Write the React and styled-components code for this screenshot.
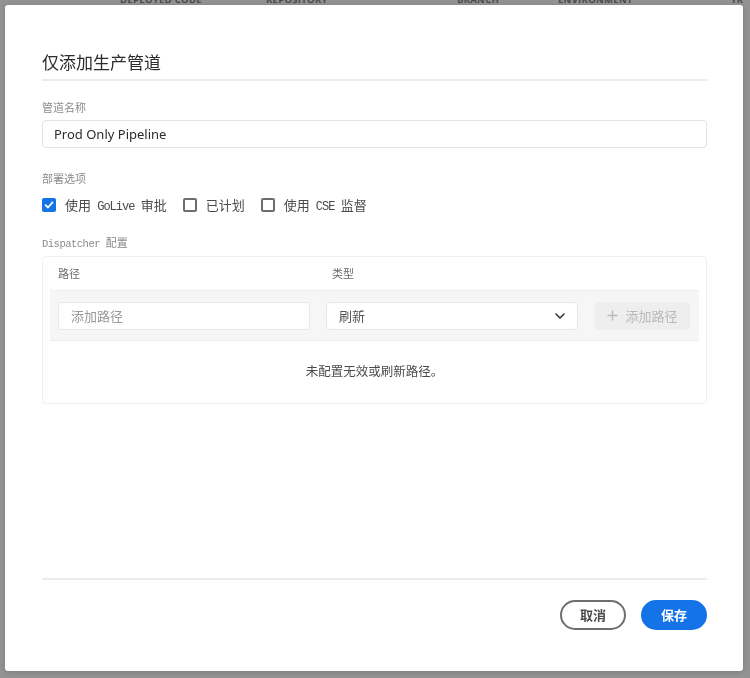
import styled, { createGlobalStyle } from "styled-components";

const GlobalStyle = createGlobalStyle`
  html, body {
    margin: 0;
    padding: 0;
    background: #929292;
    font-family: "Noto Sans", "Noto Sans CJK SC", sans-serif;
  }
`;

const Page = styled.div`
  width: 750px;
  height: 678px;
  overflow: hidden;
  background: #929292;
`;

const TableHead = styled.div`
  display: flex;
  margin-top: -7px;
  height: 14px;
  font-family: "Open Sans", sans-serif;
  font-size: 9.5px;
  font-weight: 700;
  letter-spacing: 0.3px;
  color: #4a4a4a;
  white-space: nowrap;
`;

const HeadCell = styled.div`
  width: ${(p) => p.w}px;
  flex-shrink: 0;
`;

const Overlay = styled.div`
  position: fixed;
  top: 5px;
  left: 5px;
  width: 738px;
  height: 666px;
  box-sizing: border-box;
  background: #fff;
  border-radius: 3px;
  box-shadow: 0 1px 4px rgba(0, 0, 0, 0.15);
  padding: 0 36px 41px 37px;
  display: flex;
  flex-direction: column;
  color: #2c2c2c;
`;

const Title = styled.h2`
  margin: 44px 0 0;
  font-family: "Noto Sans CJK SC", sans-serif;
  font-size: 17px;
  line-height: 26px;
  font-weight: 400;
  color: #2c2c2c;
`;

const Divider = styled.div`
  height: 2px;
  background: #ececec;
  margin-top: ${(p) => p.top || 0}px;
`;

const Label = styled.div`
  margin-top: ${(p) => p.top}px;
  height: 16px;
  font-family: "Noto Sans CJK SC", sans-serif;
  font-size: 11px;
  line-height: 16px;
  color: #8a8a8a;
`;

const Mono = styled.span`
  font-family: "Liberation Mono", monospace;
  font-size: ${(p) => p.size}px;
  letter-spacing: ${(p) => p.track}px;
  line-height: 1;
  white-space: pre;
`;

const TextInput = styled.div`
  margin-top: 5px;
  height: 28px;
  box-sizing: border-box;
  border: 1px solid #e3e3e3;
  border-radius: 4px;
  padding: 0 11px;
  display: flex;
  align-items: center;
  font-size: 13px;
  color: #2c2c2c;
  background: #fff;
`;

const CheckRow = styled.div`
  margin-top: 9px;
  height: 20px;
  display: flex;
  align-items: center;
  gap: 16px;
`;

const CheckItem = styled.label`
  display: flex;
  align-items: center;
  gap: 9px;
  height: 20px;
  font-family: "Noto Sans CJK SC", sans-serif;
  font-size: 13px;
  line-height: 20px;
  color: #4b4b4b;
  white-space: pre;
`;

const Box = styled.span`
  width: 14px;
  height: 14px;
  box-sizing: border-box;
  border-radius: 2px;
  border: ${(p) => (p.checked ? "none" : "2px solid #6d6d6d")};
  background: ${(p) => (p.checked ? "#1473e6" : "#fff")};
  display: flex;
  align-items: center;
  justify-content: center;
`;

const Panel = styled.div`
  margin-top: 6px;
  height: 148px;
  box-sizing: border-box;
  border: 1px solid #f0f0f0;
  border-radius: 4px;
  padding: 9px 7px 0;
`;

const ColHeads = styled.div`
  display: flex;
  padding-left: 8px;
  height: 14px;
  font-family: "Noto Sans CJK SC", sans-serif;
  font-size: 11px;
  line-height: 14px;
  color: #6a6a6a;
`;

const ColHead = styled.div`
  width: ${(p) => p.w}px;
`;

const EntryRow = styled.div`
  margin-top: 10px;
  height: 51px;
  box-sizing: border-box;
  background: #f6f6f6;
  border-top: 1px solid #eeeeee;
  border-bottom: 1px solid #eeeeee;
  padding: 0 8px;
  display: flex;
  align-items: center;
`;

const Field = styled.div`
  width: 252px;
  height: 28px;
  box-sizing: border-box;
  background: #fff;
  border: 1px solid #e8e8e8;
  border-radius: 4px;
  padding: 0 12px;
  display: flex;
  align-items: center;
  justify-content: space-between;
  font-family: "Noto Sans CJK SC", sans-serif;
  font-size: 13px;
  color: ${(p) => (p.placeholder ? "#9a9a9a" : "#555")};
  margin-right: ${(p) => p.gap}px;
`;

const AddButton = styled.div`
  width: 95px;
  height: 28px;
  border-radius: 4px;
  background: #eeeeee;
  display: flex;
  align-items: center;
  justify-content: center;
  gap: 7px;
  font-family: "Noto Sans CJK SC", sans-serif;
  font-size: 13px;
  color: #b9b9b9;
`;

const Empty = styled.div`
  margin-top: 22px;
  text-align: center;
  font-family: "Noto Sans CJK SC", sans-serif;
  font-size: 12.5px;
  line-height: 16px;
  color: #4b4b4b;
`;

const Spacer = styled.div`
  flex: 1;
`;

const Footer = styled.div`
  margin-top: 20px;
  display: flex;
  justify-content: flex-end;
  gap: 15px;
`;

const Pill = styled.button`
  width: 66px;
  height: 30px;
  box-sizing: border-box;
  border-radius: 15px;
  font-family: "Noto Sans CJK SC", sans-serif;
  font-size: 13px;
  line-height: 1;
  font-weight: 700;
  padding: 0 0 1px;
  cursor: pointer;
  border: 2px solid ${(p) => (p.primary ? "#1473e6" : "#6e6e6e")};
  background: ${(p) => (p.primary ? "#1473e6" : "#fff")};
  color: ${(p) => (p.primary ? "#fff" : "#4b4b4b")};
`;

const Check = () => (
  <svg width="10" height="10" viewBox="0 0 10 10">
    <path d="M1.6 5.2 L4 7.5 L8.5 2.4" fill="none" stroke="#fff" strokeWidth="1.8" strokeLinecap="round" strokeLinejoin="round" />
  </svg>
);

const Chevron = () => (
  <svg width="10" height="6" viewBox="0 0 10 6">
    <path d="M1 1 L5 5 L9 1" fill="none" stroke="#333" strokeWidth="1.6" strokeLinecap="round" strokeLinejoin="round" />
  </svg>
);

const Plus = () => (
  <svg width="11" height="11" viewBox="0 0 11 11">
    <path d="M5.5 0.5 V10.5 M0.5 5.5 H10.5" stroke="#b9b9b9" strokeWidth="1.4" />
  </svg>
);

export default function App() {
  return (
    <Page>
      <GlobalStyle />
      <TableHead>
        <HeadCell w={120} />
        <HeadCell w={146}>DEPLOYED CODE</HeadCell>
        <HeadCell w={191}>REPOSITORY</HeadCell>
        <HeadCell w={101}>BRANCH</HeadCell>
        <HeadCell w={173}>ENVIRONMENT</HeadCell>
        <HeadCell w={40}>TR</HeadCell>
      </TableHead>
      <Overlay>
        <Title>仅添加生产管道</Title>
        <Divider top={4} />
        <Label top={18}>管道名称</Label>
        <TextInput>Prod Only Pipeline</TextInput>
        <Label top={22}>部署选项</Label>
        <CheckRow>
          <CheckItem>
            <Box checked>
              <Check />
            </Box>
            <span>
              使用<Mono size={12} track={-1}> GoLive </Mono>审批
            </span>
          </CheckItem>
          <CheckItem>
            <Box />
            已计划
          </CheckItem>
          <CheckItem>
            <Box />
            <span>
              使用<Mono size={12} track={-1}> CSE </Mono>监督
            </span>
          </CheckItem>
        </CheckRow>
        <Label top={19}>
          <Mono size={10.5} track={-0.5}>Dispatcher </Mono>配置
        </Label>
        <Panel>
          <ColHeads>
            <ColHead w={274}>路径</ColHead>
            <ColHead w={100}>类型</ColHead>
          </ColHeads>
          <EntryRow>
            <Field placeholder gap={16}>添加路径</Field>
            <Field gap={17}>
              刷新
              <Chevron />
            </Field>
            <AddButton>
              <Plus />
              添加路径
            </AddButton>
          </EntryRow>
          <Empty>未配置无效或刷新路径。</Empty>
        </Panel>
        <Spacer />
        <Divider />
        <Footer>
          <Pill>取消</Pill>
          <Pill primary>保存</Pill>
        </Footer>
      </Overlay>
    </Page>
  );
}
